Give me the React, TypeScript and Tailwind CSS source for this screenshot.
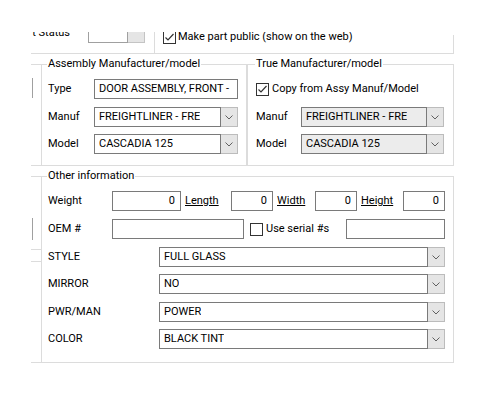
import React from "react";

function Chevron() {
  return (
    <svg width="8" height="5" viewBox="0 0 8 5" className="block">
      <polyline points="0.5,0.5 4,4 7.5,0.5" fill="none" stroke="#606060" strokeWidth="1" />
    </svg>
  );
}

function Check({ checked }: { checked?: boolean }) {
  return (
    <div className="flex h-[13px] w-[13px] shrink-0 items-center justify-center border border-[#333] bg-white">
      {checked && (
        <svg width="11" height="11" viewBox="0 0 11 11" className="block">
          <polyline points="1.5,5.5 4,8 9.5,2" fill="none" stroke="#333" strokeWidth="1.2" />
        </svg>
      )}
    </div>
  );
}

function Combo({ value, className, disabled }: { value: string; className: string; disabled?: boolean }) {
  return (
    <div className={`flex h-[20px] ${className}`}>
      <div className={`flex min-w-0 flex-1 items-center border border-[#7a7a7a] pl-[4px] ${disabled ? "bg-[#ececec]" : "bg-white"}`}>
        <span className="truncate whitespace-nowrap">{value}</span>
      </div>
      <div className="flex w-[17px] items-center justify-center border border-l-0 border-[#bcbcbc] bg-[#e5e5e5]">
        <Chevron />
      </div>
    </div>
  );
}

function TextBox({ value = "", className }: { value?: string; className: string }) {
  return (
    <div className={`flex h-[20px] items-center border border-[#7a7a7a] bg-white ${className}`}>
      <span className="whitespace-nowrap">{value}</span>
    </div>
  );
}

function Row({ label, labelW, children, gap }: { label: string; labelW: string; children: React.ReactNode; gap: string }) {
  return (
    <div className={`flex h-[20px] items-center ${gap}`}>
      <span className={`${labelW} shrink-0`}>{label}</span>
      {children}
    </div>
  );
}

const options = [
  { label: "STYLE", value: "FULL GLASS" },
  { label: "MIRROR", value: "NO" },
  { label: "PWR/MAN", value: "POWER" },
  { label: "COLOR", value: "BLACK TINT" },
];

export default function App() {
  return (
    <div className="h-[400px] w-[500px] overflow-hidden bg-white pl-[31px] pt-[32px] font-['Roboto',sans-serif] text-[11px] leading-[14px] text-black">
      {/* clipped top of the part form */}
      <div className="flex h-[22px] w-[423px] overflow-hidden border-b border-[#dcdcdc]">
        <div className="flex w-[124px] shrink-0 border-r border-[#dcdcdc]">
          <div className="-mt-[9px] flex h-[20px] items-center">
            <div className="flex w-[39px] justify-end overflow-hidden whitespace-nowrap">
              <span>Part Status</span>
            </div>
            <div className="ml-[18px] flex h-[20px] w-[57px]">
              <div className="flex-1 border border-[#a0a0a0] bg-white" />
              <div className="w-[17px] border border-l-0 border-[#c4c4c4] bg-[#e5e5e5]" />
            </div>
          </div>
        </div>
        <div className="flex flex-1">
          <div className="-mt-[2px] flex h-[14px] items-center gap-[2px] pl-[8px]">
            <Check checked />
            <span className="whitespace-nowrap">Make part public (show on the web)</span>
          </div>
          <div className="ml-auto mt-[3px] h-[18px] w-px bg-[#dcdcdc]" />
        </div>
      </div>

      {/* manufacturer groups */}
      <div className="mt-[3px] flex w-[423px]">
        <div className="mt-[7px] w-[10px] shrink-0 border-y border-[#dcdcdc]">
          <div className="ml-px mt-[13px] h-[20px] border-l border-[#a0a0a0]" />
        </div>
        <fieldset className="w-[206px] shrink-0 border border-[#dcdcdc] pb-[11px] pl-[6px] pr-[8px] pt-[8px]">
          <legend className="-ml-px px-px leading-[14px]">Assembly Manufacturer/model</legend>
          <Row label="Type" labelW="w-[46px]" gap="">
            <TextBox value="DOOR ASSEMBLY, FRONT -" className="w-[144px] pl-[4px]" />
          </Row>
          <Row label="Manuf" labelW="w-[46px]" gap="mt-[8px]">
            <Combo value="FREIGHTLINER - FRE" className="w-[144px]" />
          </Row>
          <Row label="Model" labelW="w-[46px]" gap="mt-[7px]">
            <Combo value="CASCADIA 125" className="w-[144px]" />
          </Row>
        </fieldset>
        <fieldset className="w-[207px] shrink-0 border border-[#dcdcdc] pb-[11px] pl-[8px] pr-[9px] pt-[8px]">
          <legend className="-ml-px px-px leading-[14px]">True Manufacturer/model</legend>
          <div className="flex h-[20px] items-center gap-[3px]">
            <Check checked />
            <span className="whitespace-nowrap">Copy from Assy Manuf/Model</span>
          </div>
          <Row label="Manuf" labelW="w-[45px]" gap="mt-[8px]">
            <Combo value="FREIGHTLINER - FRE" className="w-[143px]" disabled />
          </Row>
          <Row label="Model" labelW="w-[45px]" gap="mt-[7px]">
            <Combo value="CASCADIA 125" className="w-[143px]" disabled />
          </Row>
        </fieldset>
      </div>

      {/* other information */}
      <div className="mt-[3px] flex w-[423px]">
        <div className="mt-[7px] w-[10px] shrink-0 border-y border-[#dcdcdc]">
          <div className="ml-px mt-[41px] h-[22px] border-l border-[#a0a0a0]" />
          <div className="mt-[9px] border-t border-[#dcdcdc]" />
          <div className="mt-[11px] border-t border-[#dcdcdc]" />
        </div>
        <fieldset className="w-[413px] shrink-0 border border-[#dcdcdc] pb-[13px] pl-[6px] pr-[8px] pt-[8px]">
          <legend className="-ml-px px-px leading-[14px]">Other information</legend>
          <Row label="Weight" labelW="w-[64px]" gap="">
            <TextBox value="0" className="w-[69px] justify-end pr-[5px]" />
            <span className="w-[50px] pl-[4px] underline">Length</span>
            <TextBox value="0" className="w-[42px] justify-end pr-[5px]" />
            <span className="w-[42px] pl-[4px] underline">Width</span>
            <TextBox value="0" className="w-[42px] justify-end pr-[5px]" />
            <span className="w-[46px] pl-[4px] underline">Height</span>
            <TextBox value="0" className="w-[42px] justify-end pr-[5px]" />
          </Row>
          <Row label="OEM #" labelW="w-[64px]" gap="mt-[8px]">
            <TextBox className="w-[132px]" />
            <div className="ml-[6px]">
              <Check />
            </div>
            <span className="ml-[3px] whitespace-nowrap">Use serial #s</span>
            <TextBox className="ml-auto w-[99px]" />
          </Row>
          {options.map((o, i) => (
            <Row key={o.label} label={o.label} labelW="w-[111px]" gap={i % 2 === 0 ? "mt-[8px]" : "mt-[7px]"}>
              <Combo value={o.value} className="w-[286px]" />
            </Row>
          ))}
        </fieldset>
      </div>
    </div>
  );
}
